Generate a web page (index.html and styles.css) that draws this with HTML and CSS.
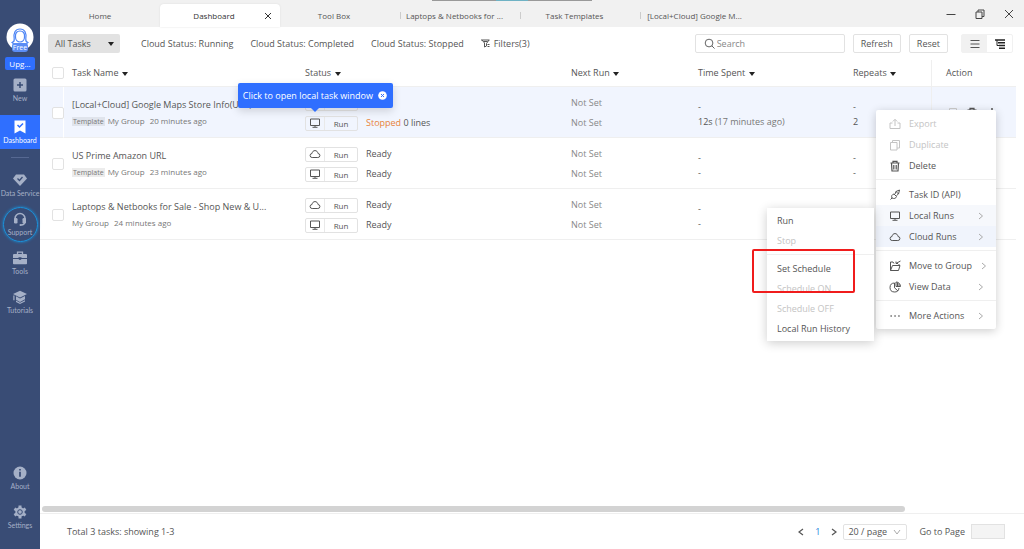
FILE: index.html
```html
<!DOCTYPE html>
<html lang="en">
<head>
<meta charset="utf-8">
<title>Dashboard</title>
<link rel="stylesheet" href="styles.css">
</head>
<body>
<svg class="sprite" aria-hidden="true">
  <symbol id="monitor" viewBox="0 0 12 12"><path d="M1.500 2h9v6.500h-9zM6 8.500v1.500M3.500 10.300h5" fill="none" stroke="currentColor"/></symbol>
  <symbol id="cloud" viewBox="0 0 12 12"><path d="M3.200 9.500a2 2 0 0 1-.2-4C3.300 3.500 4.500 2.600 6 2.600s2.700.9 3 2.900a2 2 0 0 1-.2 4z" fill="none" stroke="currentColor"/></symbol>
  <symbol id="copy" viewBox="0 0 12 12"><path d="M1.500 3.500h6.500v7.500h-6.500zM3.500 3.500v-2h7v7.500h-2.500" fill="none" stroke="currentColor"/></symbol>
  <symbol id="trash" viewBox="0 0 12 12"><path d="M1.500 3h9M4 2.800V1.300h4v1.500M2.500 3l.5 8h6l.5-8M4.800 5v4.500M7.200 5v4.500" fill="none" stroke="currentColor" stroke-width="1.200"/></symbol>
  <symbol id="chevron" viewBox="0 0 8 8"><path d="M2 1l3.500 3L2 7" fill="none" stroke="currentColor"/></symbol>
  <symbol id="caret" viewBox="0 0 6 4"><path d="M0 0h6L3 4z" fill="currentColor"/></symbol>
</svg>
<div class="app">
  <nav class="sidebar">
    <div class="avatar">
      <svg viewBox="0 0 28 28"><circle cx="14" cy="14" r="13.500" fill="#fff"/><path d="M9.500 21c-2 0-3-.5-3.500-1.500 2-.5 2.500-1.500 2.200-3.500-1-6 1-10 5.800-10s6.800 4 5.800 10c-.3 2 .2 3 2.200 3.500-.5 1-1.500 1.500-3.500 1.500M9.500 14c-.5-4 1.500-6 4.500-6s5 2 4.500 6M9.500 14c0 3 2 5 4.500 5s4.500-2 4.500-5" fill="none" stroke="#4d85f5" stroke-width="1.200"/></svg>
      <span class="badge">Free</span>
    </div>
    <button class="upgrade">Upg...</button>
    <a class="nav-item" href="#"><svg viewBox="0 0 14 14"><rect x=".5" y=".5" width="13" height="13" rx="1.500" fill="currentColor"/><path d="M7 4v6M4 7h6" stroke="#394c75" stroke-width="1.500"/></svg><span>New</span></a>
    <a class="nav-item active" href="#"><svg viewBox="0 0 14 14"><path d="M1.500.5h11v13L7 10.500l-5.500 3z" fill="currentColor"/><path d="M4.500 5l2 2 3.500-3.500" fill="none" stroke="#2f6fff" stroke-width="1.500"/></svg><span>Dashboard</span></a>
    <hr class="nav-rule">
    <a class="nav-item" href="#"><svg viewBox="0 0 14 14"><path d="M3 1.500h8L14 5.500 7 13 0 5.500z" fill="currentColor"/><path d="M4.500 5.500l2 2L9.500 4" fill="none" stroke="#394c75" stroke-width="1.300"/></svg><span>Data Service</span></a>
    <a class="nav-item support" href="#"><svg viewBox="0 0 14 14"><path d="M2 8V6.500a5 5 0 0 1 10 0V9c0 3-1.500 4-4 4" fill="none" stroke="currentColor" stroke-width="1.500"/><rect x="1" y="6" width="3.500" height="5.500" rx="1.300" fill="currentColor"/><rect x="9.500" y="6" width="3.500" height="5.500" rx="1.300" fill="currentColor"/><circle cx="7.500" cy="13" r="1" fill="currentColor"/></svg><span>Support</span></a>
    <a class="nav-item" href="#"><svg viewBox="0 0 14 14"><path d="M4.500 3.500V1.200h5v2.300" fill="none" stroke="currentColor" stroke-width="1.300"/><path d="M1 3h12q1 0 1 1v3H8.500v-.7h-3V7H0V4q0-1 1-1zM0 8h5.500q1.500 2 3 0H14v4.500q0 .8-.8.8H.8q-.8 0-.8-.8z" fill="currentColor"/></svg><span>Tools</span></a>
    <a class="nav-item" href="#"><svg viewBox="0 0 14 14"><path d="M7 .8l7 3.200-7 3.500L0 4zM3 6.300l4 2.200 5-2.500v3.200L7 12 3 9.800zM.3 5.500h1.200v4.700H.3zM3 10.500l4 2.200 5-2.500v1.300L7 14l-4-2z" fill="currentColor"/></svg><span>Tutorials</span></a>
    <div class="nav-space"></div>
    <a class="nav-item" href="#"><svg viewBox="0 0 14 14"><circle cx="7" cy="7" r="6.500" fill="currentColor"/><path d="M7 3v1.600M7 5.800v5" stroke="#394c75" stroke-width="1.700"/></svg><span>About</span></a>
    <a class="nav-item" href="#"><svg viewBox="0 0 14 14"><circle cx="7" cy="7" r="4.700" fill="currentColor"/><path d="M7 .5v13M1.400 3.700l11.200 6.600M1.400 10.300l11.200-6.600" stroke="currentColor" stroke-width="3"/><circle cx="7" cy="7" r="2.300" fill="#a5b0c7" stroke="#394c75"/></svg><span>Settings</span></a>
  </nav>

  <main class="main">
    <header class="tabs">
      <div class="top-strip"></div>
      <a class="tab home" href="#"><span>Home</span></a>
      <div class="tab current"><a href="#">Dashboard</a><button class="close" aria-label="Close tab"><svg viewBox="0 0 8 8"><path d="M1 1l6 6M7 1L1 7" stroke="currentColor" fill="none"/></svg></button></div>
      <a class="tab" href="#"><span>Tool Box</span></a>
      <a class="tab split" href="#"><span>Laptops &amp; Netbooks for ...</span></a>
      <a class="tab split" href="#"><span>Task Templates</span></a>
      <a class="tab split" href="#"><span>[Local+Cloud] Google M...</span></a>
      <div class="window-controls">
        <button aria-label="Minimize"><svg viewBox="0 0 10 10"><path d="M.5 5.500h9" stroke="currentColor"/></svg></button>
        <button aria-label="Restore"><svg viewBox="0 0 10 10"><path d="M1 3h6v6.500H1zM3 3V1h6v6.500H7" stroke="currentColor" fill="none"/></svg></button>
        <button aria-label="Close"><svg viewBox="0 0 10 10"><path d="M1 1l8 8M9 1L1 9" stroke="currentColor" fill="none"/></svg></button>
      </div>
    </header>

    <section class="toolbar">
      <button class="all-tasks">All Tasks <svg class="caret"><use href="#caret"/></svg></button>
      <div class="filters">
        <a href="#">Cloud Status: Running</a>
        <a href="#">Cloud Status: Completed</a>
        <a href="#">Cloud Status: Stopped</a>
        <a class="filter-link" href="#"><svg viewBox="0 0 9 9"><path d="M0 1h8.500M1 1l2.500 3v4l2-1V4.500L8 1M2.500 2.500h4M6.500 5.500h2M6.500 7.500h2" fill="none" stroke="currentColor"/></svg>Filters(3)</a>
      </div>
      <label class="search"><svg viewBox="0 0 12 12"><circle cx="5.500" cy="5.500" r="4.200" fill="none" stroke="currentColor"/><path d="M8.500 8.500l3 3" stroke="currentColor"/></svg><input type="search" placeholder="Search" aria-label="Search"></label>
      <button class="plain">Refresh</button>
      <button class="plain">Reset</button>
      <div class="views">
        <button class="selected" aria-label="List view"><svg viewBox="0 0 10 10"><path d="M.5 1.500h9M.5 5h9M.5 8.500h9" stroke="currentColor"/></svg></button>
        <button aria-label="Tree view"><svg viewBox="0 0 10 10"><path d="M0 1h10M3 3.800h7M4 6.500h6M4 9.200h6" stroke="#222" stroke-width="1.600"/><path d="M2 1v5.500h2" stroke="#222" fill="none"/></svg></button>
      </div>
    </section>

    <div class="table-area">
      <table>
        <colgroup><col class="c-check"><col><col class="c-status"><col class="c-next"><col class="c-time"><col class="c-repeat"><col class="c-action"></colgroup>
        <thead>
          <tr>
            <th class="check"><input type="checkbox" aria-label="Select all"></th>
            <th>Task Name <svg class="caret"><use href="#caret"/></svg></th>
            <th>Status <svg class="caret"><use href="#caret"/></svg></th>
            <th>Next Run <svg class="caret"><use href="#caret"/></svg></th>
            <th>Time Spent <svg class="caret"><use href="#caret"/></svg></th>
            <th>Repeats <svg class="caret"><use href="#caret"/></svg></th>
            <th class="action">Action</th>
          </tr>
        </thead>
        <tbody>
          <tr class="highlight">
            <td class="check"><input type="checkbox" aria-label="Select Google Maps Store Info"></td>
            <td><a class="name" href="#">[Local+Cloud] Google Maps Store Info(URL)</a><div class="meta"><span class="tag">Template</span><span>My Group</span><span>20 minutes ago</span></div></td>
            <td class="anchor">
              <div class="run-line"><button class="run"><svg><use href="#cloud"/></svg><span></span></button></div>
              <div class="run-line"><button class="run"><svg><use href="#monitor"/></svg><span>Run</span></button><p><em>Stopped</em> 0 lines</p></div>
              <div class="tooltip" role="tooltip">Click to open local task window<button aria-label="Dismiss"><svg viewBox="0 0 9 9"><circle cx="4.500" cy="4.500" r="4.300" fill="#fff"/><path d="M3 3l3 3M6 3L3 6" stroke="#2f6fff"/></svg></button></div>
            </td>
            <td class="quiet"><p>Not Set</p><p>Not Set</p></td>
            <td class="pair"><p>-</p><p>12s <span>(17 minutes ago)</span></p></td>
            <td class="pair"><p>-</p><p>2</p></td>
            <td class="action anchor">
              <div class="action-icons"><svg class="off"><use href="#copy"/></svg><svg><use href="#trash"/></svg><svg viewBox="0 0 12 12"><path d="M6 1v2M6 5v2M6 9v2" stroke="currentColor" stroke-width="1.500"/></svg></div>
              <div class="menu">
                <button disabled><svg viewBox="0 0 12 12"><path d="M3.500 5H1v5.500h10V5H8.500M6 8V1.500M3.800 3.500L6 1.300l2.200 2.200" fill="none" stroke="currentColor"/></svg>Export</button>
                <button disabled><svg><use href="#copy"/></svg>Duplicate</button>
                <button><svg><use href="#trash"/></svg>Delete</button>
                <hr>
                <button><svg viewBox="0 0 12 12"><path d="M1.500 10.500L3 9M3 9c-1-2 0-3.500 2-4l2.500 2.500c-.5 2-2.500 2.500-4.500 1.500zM6 5l1-2.500L10.500 1 9.500 5 7.500 6.500M5 5l2 2M7 2.500l2.500 2.500" fill="none" stroke="currentColor"/></svg>Task ID (API)</button>
                <div class="parent">
                  <button class="open"><svg><use href="#monitor"/></svg>Local Runs<svg class="chev"><use href="#chevron"/></svg></button>
                  <div class="submenu">
                    <button>Run</button>
                    <button disabled>Stop</button>
                    <hr>
                    <button>Set Schedule</button>
                    <button disabled>Schedule ON</button>
                    <button disabled>Schedule OFF</button>
                    <button>Local Run History</button>
                    <div class="marker"></div>
                  </div>
                </div>
                <button class="hover"><svg><use href="#cloud"/></svg>Cloud Runs<svg class="chev"><use href="#chevron"/></svg></button>
                <hr>
                <button><svg viewBox="0 0 12 12"><path d="M5 3.500L4 2H1.500v8.500h8l1.500-5H3.500l-2 5M10 5.500V4M11.500 1L7 3.500M7 1.500v2h2" fill="none" stroke="currentColor"/></svg>Move to Group<svg class="chev"><use href="#chevron"/></svg></button>
                <button><svg viewBox="0 0 12 12"><path d="M5.500 2a4.500 4.500 0 1 0 4.500 5M5.500 2v4.800L9 10M7 1v4.500h4.500A4.500 4.500 0 0 0 7 1zM8.500 1.500v4M10 2.500v3" fill="none" stroke="currentColor"/></svg>View Data<svg class="chev"><use href="#chevron"/></svg></button>
                <hr>
                <button><svg viewBox="0 0 12 12"><path d="M1.500 6h1.300M5.400 6h1.300M9.300 6h1.300" stroke="currentColor" stroke-width="1.300"/></svg>More Actions<svg class="chev"><use href="#chevron"/></svg></button>
              </div>
            </td>
          </tr>
          <tr>
            <td class="check"><input type="checkbox" aria-label="Select US Prime Amazon URL"></td>
            <td><a class="name" href="#">US Prime Amazon URL</a><div class="meta"><span class="tag">Template</span><span>My Group</span><span>23 minutes ago</span></div></td>
            <td>
              <div class="run-line"><button class="run"><svg><use href="#cloud"/></svg><span>Run</span></button><p>Ready</p></div>
              <div class="run-line"><button class="run"><svg><use href="#monitor"/></svg><span>Run</span></button><p>Ready</p></div>
            </td>
            <td class="quiet"><p>Not Set</p><p>Not Set</p></td>
            <td class="pair"><p>-</p><p>-</p></td>
            <td class="pair"><p>-</p><p>-</p></td>
            <td></td>
          </tr>
          <tr>
            <td class="check"><input type="checkbox" aria-label="Select Laptops and Netbooks"></td>
            <td><a class="name" href="#">Laptops &amp; Netbooks for Sale - Shop New &amp; U...</a><div class="meta"><span>My Group</span><span>24 minutes ago</span></div></td>
            <td>
              <div class="run-line"><button class="run"><svg><use href="#cloud"/></svg><span>Run</span></button><p>Ready</p></div>
              <div class="run-line"><button class="run"><svg><use href="#monitor"/></svg><span>Run</span></button><p>Ready</p></div>
            </td>
            <td class="quiet"><p>Not Set</p><p>Not Set</p></td>
            <td class="pair"><p>-</p><p>-</p></td>
            <td class="pair"><p>-</p><p>-</p></td>
            <td></td>
          </tr>
        </tbody>
      </table>
    </div>
    <div class="scroll-track"><div class="scroll-thumb"></div></div>
    <footer class="footer">
      <p>Total 3 tasks: showing 1-3</p>
      <div class="pager">
        <button class="arrow" aria-label="Previous page"><svg viewBox="0 0 8 8"><path d="M6 1L2 4l4 3" fill="none" stroke="currentColor" stroke-width="1.200"/></svg></button>
        <a class="page" href="#">1</a>
        <button class="arrow" aria-label="Next page"><svg viewBox="0 0 8 8"><path d="M2 1l4 3-4 3" fill="none" stroke="currentColor" stroke-width="1.200"/></svg></button>
        <div class="page-size"><select aria-label="Rows per page"><option>20 / page</option></select><svg viewBox="0 0 8 8"><path d="M1 2l3 4 3-4" fill="none" stroke="currentColor"/></svg></div>
        <label class="goto">Go to Page <input type="text"></label>
      </div>
    </footer>
  </main>
</div>
</body>
</html>
```

FILE: styles.css
```css
:root {
  --blue: #2f6fff;
  --navy: #394c75;
  --ink: #555;
  --line: #efefef;
  --text: 9px;
  --small: 8px;
}
* { box-sizing: border-box; }
body {
  margin: 0;
  font-family: "Open Sans", "Noto Sans", sans-serif;
  font-size: var(--text);
  line-height: 14px;
  color: var(--ink);
  background: #fff;
}
button, input, select { font: inherit; color: inherit; margin: 0; }
button { padding: 0; border: 0; background: none; white-space: nowrap; }
a { color: inherit; text-decoration: none; }
p { margin: 0; }
svg { display: block; flex: none; }
.sprite { position: absolute; width: 0; height: 0; }
.app { display: flex; min-height: 100vh; }

/* Sidebar */
.sidebar {
  flex: none;
  width: 40px;
  display: flex;
  flex-direction: column;
  align-items: center;
  padding: 23px 0 13px;
  background: var(--navy);
}
.avatar { position: relative; height: 34px; }
.avatar svg { width: 28px; height: 28px; }
.badge {
  position: absolute;
  left: 6px;
  top: 20px;
  width: 16px;
  border-radius: 3px;
  background: #5b8df5;
  color: #fff;
  font-size: 7px;
  line-height: 9px;
  text-align: center;
}
.upgrade {
  width: 30px;
  height: 13px;
  border-radius: 2px;
  background: var(--blue);
  color: #fff;
  font-size: var(--small);
  line-height: 13px;
}
.nav-item {
  width: 100%;
  height: 39px;
  padding-top: 8px;
  display: flex;
  flex-direction: column;
  align-items: center;
  gap: 1px;
  color: #a5b0c7;
  font-family: Lato, "Open Sans", sans-serif;
  font-size: 7px;
  line-height: 10px;
  white-space: nowrap;
}
.nav-item svg { width: 14px; height: 14px; }
.nav-item.active { height: 34px; margin-top: 6px; padding-top: 5px; background: var(--blue); color: #fff; }
.nav-rule { width: 18px; margin: 8px 0 7px; border: 0; border-top: 1px solid #566892; }
.support { position: relative; }
.support::before {
  content: "";
  position: absolute;
  left: 3px;
  top: 3px;
  width: 33px;
  height: 33px;
  border: 1px solid #1a92dc;
  border-radius: 50%;
  box-shadow: 0 0 3px #1a92dc;
}
.nav-space { flex: 1; }

/* Tabs */
.main { flex: 1; min-width: 0; display: flex; flex-direction: column; }
.tabs { position: relative; display: flex; height: 27px; padding-top: 4px; background: #f1f1f1; }
.top-strip {
  position: absolute;
  left: 392px;
  top: 0;
  width: 160px;
  height: 1px;
  background: linear-gradient(90deg, #999 40%, #6fb2c4 40% 60%, #999 60%);
}
.tab {
  position: relative;
  width: 120px;
  padding-right: 12px;
  display: flex;
  align-items: center;
  justify-content: center;
  font-size: var(--small);
  line-height: 12px;
  white-space: nowrap;
}
.tab.home { padding-right: 0; }
.tab.current { border-radius: 4px 4px 0 0; background: #fff; color: #333; box-shadow: 0 0 2px #ddd; }
.tab.split { border-left: 1px solid transparent; border-image: linear-gradient(transparent 35%, #ccc 35% 65%, transparent 65%) 1; }
.close { position: absolute; right: 8px; top: 8px; }
.close svg { width: 8px; height: 8px; }
.window-controls { margin-left: auto; padding-right: 10px; display: flex; align-items: center; gap: 19px; height: 20px; color: #444; }
.window-controls svg { width: 10px; height: 10px; }

/* Toolbar */
.toolbar { display: flex; align-items: center; height: 33px; padding: 0 11px 0 8px; }
.all-tasks {
  width: 72px;
  height: 19px;
  padding: 0 6px 0 7px;
  display: flex;
  align-items: center;
  justify-content: space-between;
  border-radius: 2px;
  background: #e2e2e2;
}
.caret { display: inline-block; width: 6px; height: 4px; color: #222; vertical-align: middle; }
.filters { display: flex; gap: 17px; margin-left: 21px; margin-right: auto; white-space: nowrap; }
.filter-link { display: flex; align-items: center; gap: 4px; }
.filter-link svg { width: 9px; height: 9px; }
.search {
  width: 150px;
  height: 19px;
  padding-left: 8px;
  display: flex;
  align-items: center;
  border: 1px solid #e2e2e2;
  border-radius: 2px;
}
.search svg { width: 11px; height: 11px; }
.search input { flex: 1; min-width: 0; padding: 0 2px; border: 0; outline: 0; background: none; }
.search input::placeholder { color: #888; }
.plain { height: 19px; padding: 0 7px; margin-left: 8px; border: 1px solid #e2e2e2; border-radius: 2px; background: #fff; }
.views { display: flex; margin-left: 13px; border: 1px solid #f1f1f1; border-radius: 2px; }
.views button { display: grid; place-items: center; width: 25px; height: 17px; }
.views .selected { background: #f1f1f1; }
.views svg { width: 10px; height: 10px; }

/* Task table */
.table-area { flex: 1; padding-right: 8px; }
table { width: 100%; table-layout: fixed; border-collapse: separate; border-spacing: 0; }
.c-check { width: 24px; }
.c-status { width: 266px; }
.c-next { width: 127px; }
.c-time { width: 155px; }
.c-repeat { width: 86px; }
.c-action { width: 85px; }
th, td { padding: 0 0 0 8px; border-bottom: 1px solid var(--line); text-align: left; font-weight: 400; white-space: nowrap; }
th { height: 27px; }
td { height: 51px; padding-top: 2px; }
th .caret { margin-left: 1px; }
.check { padding-left: 12px; }
.check input {
  display: block;
  appearance: none;
  width: 12px;
  height: 12px;
  border: 1px solid #e2e2e2;
  border-radius: 2px;
  background: #fff;
}
.highlight td { background: #f1f5fe; }
.highlight .check { border-right: 1px solid #fff; }
th.action, td.action { padding-left: 14px; border-left: 1px solid var(--line); }
.name { display: block; }
.meta { display: flex; align-items: center; gap: 5px; margin-top: 2px; font-size: var(--small); color: #777; }
.tag { margin-right: -2px; padding: 0 1px; background: #ececec; font-size: 7px; line-height: 9px; }
.highlight .tag { background: #e0e4ec; }
.quiet { color: #888; }
.quiet p { line-height: 20px; }
.pair { padding-top: 3px; }
.pair p { line-height: 15px; }
.pair span { color: #777; }
.anchor { position: relative; }
.run-line { display: flex; align-items: center; gap: 8px; height: 20px; }
.run-line em { color: #e8833a; font-style: normal; }
.run { display: flex; width: 53px; height: 15px; border: 1px solid #e2e2e2; border-radius: 2px; line-height: 13px; font-size: var(--small); }
.run svg { width: 12px; height: 12px; margin: 0 3px; }
.run span { flex: 1; height: 13px; border-left: 1px solid #e9e9e9; }
.tooltip {
  position: absolute;
  right: 170px;
  top: -4px;
  z-index: 2;
  display: flex;
  align-items: center;
  gap: 5px;
  height: 25px;
  padding: 0 6px 0 5px;
  border-radius: 2px;
  background: var(--blue);
  color: #fff;
  box-shadow: 0 3px 8px rgba(0, 0, 0, .15);
}
.tooltip::after {
  content: "";
  position: absolute;
  left: 73px;
  top: 25px;
  border: 4px solid transparent;
  border-top-color: var(--blue);
  border-bottom: 0;
}
.tooltip svg { width: 9px; height: 9px; }
.action-icons { display: flex; gap: 8px; }
.action-icons svg { width: 12px; height: 12px; }
.off { color: #ccc; }

/* Context menus */
.menu, .submenu { position: absolute; z-index: 3; background: #fff; box-shadow: 0 2px 10px rgba(0, 0, 0, .2); }
.menu { right: 20px; top: 23px; width: 120px; padding: 3px 0; border-radius: 2px; }
.submenu { right: 122px; top: 3px; width: 107px; padding: 3px 0 2px; }
.menu button { width: 100%; height: 21px; padding: 0 11px 0 13px; display: flex; align-items: center; gap: 8px; }
.menu button:disabled { color: #c4c4c4; }
.menu svg { width: 12px; height: 12px; }
.menu .chev { width: 8px; height: 8px; margin-left: auto; color: #aaa; }
.menu .open { background: #f6f8fc; }
.menu .hover { background: #f0f4fc; }
.menu hr { margin: 3px 0 4px; border: 0; border-top: 1px solid var(--line); }
.menu .submenu button { height: 20px; padding: 0 10px; }
.parent { position: relative; }
.marker { position: absolute; left: -15px; top: 41px; width: 103px; height: 44px; border: 2px solid #f01c1c; border-radius: 2px; }

/* Footer */
.scroll-track { padding: 0 119px 0 2px; }
.scroll-thumb { height: 6px; border-radius: 3px; background: #d3d3d3; }
.footer {
  display: flex;
  align-items: center;
  justify-content: space-between;
  height: 36px;
  margin-top: 1px;
  padding: 0 19px 0 27px;
  border-top: 1px solid var(--line);
}
.pager { display: flex; align-items: center; }
.arrow svg { width: 8px; height: 8px; }
.page { margin: 0 10px; color: #1b7fdc; }
.page-size { position: relative; margin-left: 5px; }
.page-size select { display: block; appearance: none; width: 64px; height: 16px; padding: 0 4px; border: 1px solid #e2e2e2; border-radius: 2px; background: #fff; line-height: 14px; }
.page-size svg { position: absolute; right: 6px; top: 4px; width: 8px; height: 8px; color: #aaa; }
.goto { display: flex; align-items: center; gap: 6px; margin-left: 12px; }
.goto input { width: 34px; height: 15px; border: 1px solid #e2e2e2; background: #f4f4f4; }
```
